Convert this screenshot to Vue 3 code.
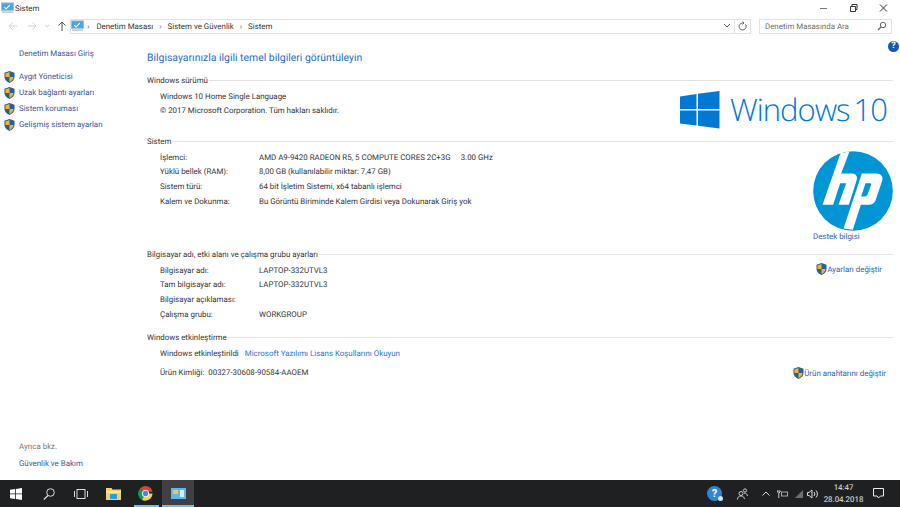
<script setup>
const sideLinks = ['Aygıt Yöneticisi', 'Uzak bağlantı ayarları', 'Sistem koruması', 'Gelişmiş sistem ayarları']
const systemRows = [
  ['İşlemci:', 'AMD A9-9420 RADEON R5, 5 COMPUTE CORES 2C+3G', '3.00 GHz'],
  ['Yüklü bellek (RAM):', '8,00 GB (kullanılabilir miktar: 7,47 GB)'],
  ['Sistem türü:', '64 bit İşletim Sistemi, x64 tabanlı işlemci'],
  ['Kalem ve Dokunma:', 'Bu Görüntü Biriminde Kalem Girdisi veya Dokunarak Giriş yok']
]
const nameRows = [
  ['Bilgisayar adı:', 'LAPTOP-332UTVL3'],
  ['Tam bilgisayar adı:', 'LAPTOP-332UTVL3'],
  ['Bilgisayar açıklaması:', ''],
  ['Çalışma grubu:', 'WORKGROUP']
]
</script>

<template>
  <div class="window">
    <header class="titlebar">
      <svg class="monitor" width="13" height="12" viewBox="0 0 14 12"><rect x="0.500" y="0.500" width="13" height="8" fill="#45a6ea" stroke="#a9bccd"/><path d="M3.500 5l2 2 4-4" stroke="#fff" stroke-width="1.200" fill="none"/><rect x="1" y="9.500" width="12" height="2" fill="#c5ccd3"/></svg>
      <span class="title">Sistem</span>
      <div class="caption">
        <svg width="9" height="10" viewBox="0 0 9 10"><path d="M1 5.500h7" stroke="#777" fill="none"/></svg>
        <svg width="9" height="10" viewBox="0 0 9 10"><path d="M1.500 3.500h5v5h-5zM3 3.500v-2h5v5H6.500" stroke="#333" fill="none"/></svg>
        <svg width="9" height="10" viewBox="0 0 9 10"><path d="M1 1.500l7 7M8 1.500l-7 7" stroke="#333" fill="none"/></svg>
      </div>
    </header>

    <nav class="addressrow">
      <svg class="nav" width="44" height="10" viewBox="0 0 44 10"><path d="M1 5h8M4.500 1.500L1 5l3.500 3.500M20 5h8M24.500 1.500L28 5l-3.500 3.500" stroke="#d0d0d0" fill="none"/><path d="M37 4l2 2 2-2" stroke="#d0d0d0" fill="none"/></svg>
      <svg class="up" width="10" height="10" viewBox="0 0 10 10"><path d="M5 10V1M1.500 4.500L5 1l3.500 3.500" stroke="#555" fill="none"/></svg>
      <div class="address">
        <svg width="13" height="12" viewBox="0 0 14 12"><rect x="0.500" y="0.500" width="13" height="8" fill="#45a6ea" stroke="#a9bccd"/><path d="M3.500 5l2 2 4-4" stroke="#fff" stroke-width="1.200" fill="none"/><rect x="1" y="9.500" width="12" height="2" fill="#c5ccd3"/></svg>
        <span class="crumb-sep first">›</span><span>Denetim Masası</span>
        <span class="crumb-sep">›</span><span>Sistem ve Güvenlik</span>
        <span class="crumb-sep">›</span><span>Sistem</span>
        <div class="addr-tools">
          <svg width="8" height="6" viewBox="0 0 8 6"><path d="M1 1l3 3 3-3" stroke="#555" fill="none"/></svg>
          <i class="addr-div"></i>
          <svg width="9" height="10" viewBox="0 0 9 10"><path d="M7.500 3.500A3.500 3.500 0 1 1 4.500 2H6M4.500 0.500L6 2 4.500 3.500" stroke="#666" fill="none"/></svg>
        </div>
      </div>
      <div class="search">
        <span>Denetim Masasında Ara</span>
        <svg width="10" height="10" viewBox="0 0 10 10"><circle cx="6" cy="4" r="2.700" stroke="#666" fill="none"/><path d="M4 6L1 9" stroke="#666" stroke-width="1.200"/></svg>
      </div>
    </nav>

    <div class="body">
      <aside class="sidebar">
        <a class="home">Denetim Masası Giriş</a>
        <ul class="sidelist">
          <li v-for="l in sideLinks" :key="l">
            <svg class="shield" width="11" height="12" viewBox="0 0 11 12"><path d="M5.500 0L10.500 1.800V6c0 3-2.500 5-5 6-2.500-1-5-3-5-6V1.800z" fill="#2a5f9e"/><path d="M5.500 1L5.500 6H1.500V2.500zM5.500 6h4c-.2 2.500-2 4-4 5z" fill="#f5b81f"/></svg>
            <a>{{ l }}</a>
          </li>
        </ul>
        <div class="seealso">
          <span>Ayrıca bkz.</span>
          <a>Güvenlik ve Bakım</a>
        </div>
      </aside>

      <main class="main">
        <div class="pagehead">
          <h1>Bilgisayarınızla ilgili temel bilgileri görüntüleyin</h1>
          <span class="help">?</span>
        </div>

        <section class="sec sec-ver">
          <h2><span>Windows sürümü</span></h2>
          <div class="sec-body">
            <div class="rows">
              <div class="row plain">Windows 10 Home Single Language</div>
              <div class="row plain">© 2017 Microsoft Corporation. Tüm hakları saklıdır.</div>
            </div>
            <div class="winlogo">
              <svg width="40" height="38" viewBox="0 0 40 38"><path d="M0 5.500L16.500 3V18H0zM18 2.800L39.500 0V18H18zM0 19.500H16.500V34.500L0 32.500zM18 19.500H39.500V37.500L18 34.800z" fill="#0078d4"/></svg>
              <span>Windows 10</span>
            </div>
          </div>
        </section>

        <section class="sec sec-sys">
          <h2><span>Sistem</span></h2>
          <div class="sec-body">
            <div class="rows">
              <div v-for="r in systemRows" :key="r[0]" class="row"><span class="k">{{ r[0] }}</span><span class="v">{{ r[1] }}</span><span v-if="r[2]" class="x">{{ r[2] }}</span></div>
            </div>
            <div class="oem">
              <svg width="80" height="80" viewBox="16.500 10.500 240 240"><circle cx="136.500" cy="130.500" r="119.500" fill="#0096d6"/><path fill="#fff" d="M99 17L126 12 101 78H132C147 78 151 88 147 100L124 172H93L116 107H98L77 172H45z"/><path fill="#fff" fill-rule="evenodd" d="M163 78H206C222 78 228 88 224 100L205 156C201 168 193 172 182 172H160L136 247 108 243zM174 107L161 147H171C176 147 179 145 180 141L191 112C192 109 190 107 187 107z"/></svg>
              <a>Destek bilgisi</a>
            </div>
          </div>
        </section>

        <section class="sec sec-name">
          <h2><span>Bilgisayar adı, etki alanı ve çalışma grubu ayarları</span></h2>
          <div class="sec-body">
            <div class="rows">
              <div v-for="r in nameRows" :key="r[0]" class="row"><span class="k">{{ r[0] }}</span><span class="v">{{ r[1] }}</span></div>
            </div>
            <a class="change change-a">
              <svg class="shield" width="11" height="12" viewBox="0 0 11 12"><path d="M5.500 0L10.500 1.800V6c0 3-2.500 5-5 6-2.500-1-5-3-5-6V1.800z" fill="#2a5f9e"/><path d="M5.500 1L5.500 6H1.500V2.500zM5.500 6h4c-.2 2.500-2 4-4 5z" fill="#f5b81f"/></svg>
              Ayarları değiştir
            </a>
          </div>
        </section>

        <section class="sec sec-act">
          <h2><span>Windows etkinleştirme</span></h2>
          <div class="activated">
            <span>Windows etkinleştirildi</span>
            <a class="lic">Microsoft Yazılımı Lisans Koşullarını Okuyun</a>
          </div>
          <div class="product">
            <span>Ürün Kimliği:&nbsp; 00327-30608-90584-AAOEM</span>
            <a class="change change-b">
              <svg class="shield" width="11" height="12" viewBox="0 0 11 12"><path d="M5.500 0L10.500 1.800V6c0 3-2.500 5-5 6-2.500-1-5-3-5-6V1.800z" fill="#2a5f9e"/><path d="M5.500 1L5.500 6H1.500V2.500zM5.500 6h4c-.2 2.500-2 4-4 5z" fill="#f5b81f"/></svg>
              Ürün anahtarını değiştir
            </a>
          </div>
        </section>
      </main>
    </div>

    <footer class="taskbar">
      <div class="tb-item"><svg width="12" height="12" viewBox="0 0 12 12"><path d="M0 1.800L5 1v4.500H0zM5.800 .9L12 0v5.500H5.800zM0 6.300h5V11l-5-.8zM5.800 6.300H12V12l-6.200-.9z" fill="#fff"/></svg></div>
      <div class="tb-item"><svg width="12" height="12" viewBox="0 0 12 12"><circle cx="7.500" cy="4.500" r="3.800" stroke="#ddd" fill="none"/><path d="M5 7.500L.8 11.500" stroke="#ddd" stroke-width="1.200"/></svg></div>
      <div class="tb-item"><svg width="14" height="10" viewBox="0 0 14 10"><rect x="3" y=".5" width="8" height="9" stroke="#ddd" fill="none"/><path d="M.5 2v6M13.500 2v6" stroke="#ddd" fill="none"/></svg></div>
      <div class="tb-item"><svg width="15" height="13" viewBox="0 0 15 13"><path d="M0 1h5.500l1 1.500H15V13H0z" fill="#f5cf67"/><path d="M0 4h15v2H0z" fill="#fbe6a2"/><path d="M4 7h7v5H4z" fill="#2d9fd8"/></svg></div>
      <div class="tb-item"><svg width="15" height="15" viewBox="0 0 16 16"><path d="M8 8L2 2.800A7.800 7.800 0 0 1 15.500 6H8z" fill="#db4437"/><path d="M8 8l-3.800 6.800A7.800 7.800 0 0 1 2 2.800z" fill="#0f9d58"/><path d="M8 8h7.500a7.800 7.800 0 0 1-11.300 6.800z" fill="#ffcd40"/><circle cx="8" cy="8" r="3.800" fill="#fff"/><circle cx="8" cy="8" r="2.900" fill="#4285f4"/></svg><i class="run"></i></div>
      <div class="tb-item active"><svg width="15" height="11" viewBox="0 0 15 11"><rect width="15" height="11" fill="#5cb8ec"/><rect x="2" y="2" width="5" height="4" fill="#e8c860"/><rect x="9" y="2" width="4" height="7" fill="#d8eefa"/></svg><i class="run"></i></div>
      <div class="tray">
        <span class="t-help">?<i class="t-dot"></i></span>
        <svg class="t-people" width="11" height="12" viewBox="0 0 11 12"><circle cx="4" cy="5.500" r="2" stroke="#ccc" fill="none"/><circle cx="8" cy="2.500" r="1.600" stroke="#ccc" fill="none"/><path d="M.5 11.500c0-2.500 1.500-3.500 3.500-3.500s3 1 3.500 3M7 5c2 0 3 1 3.500 3" stroke="#ccc" fill="none"/></svg>
        <svg class="t-chev" width="8" height="5" viewBox="0 0 8 5"><path d="M.5 4.500L4 1l3.500 3.500" stroke="#ddd" fill="none"/></svg>
        <svg class="t-net" width="11" height="8" viewBox="0 0 11 8"><path d="M0 1h3.500L1.800 3.500zM1.800 3.500V8" stroke="#ccc" fill="none"/><rect x="4.500" y="2" width="6" height="4" stroke="#aaa" fill="none"/></svg>
        <svg class="t-wifi" width="8" height="8" viewBox="0 0 8 8"><path d="M8 0v8H0z" fill="#6f6f6f"/></svg>
        <svg class="t-sound" width="12" height="10" viewBox="0 0 12 10"><path d="M.5 3.500h1.500L5 1v8L2 6.500H.5z" stroke="#ddd" fill="none"/><path d="M7 3a3 3 0 0 1 0 4M9 1.500a5 5 0 0 1 0 7" stroke="#ddd" fill="none"/></svg>
        <div class="clock"><span>14:47</span><span>28.04.2018</span></div>
        <svg class="t-note" width="11" height="11" viewBox="0 0 11 11"><path d="M.5.500h10v7.500H7.500L5.500 10 4 8H.5z" stroke="#eee" fill="none"/></svg>
      </div>
    </footer>
  </div>
</template>

<style scoped>
.window { width: 900px; height: 507px; display: flex; flex-direction: column; background: #fff; color: #333; font: 7.9px/11px Roboto, sans-serif; text-rendering: geometricPrecision; overflow: hidden; }
.titlebar { height: 15px; flex: none; display: flex; align-items: center; padding-left: 1px; }
.title { margin-left: 1px; padding-top: 1px; }
.caption { margin-left: auto; display: flex; gap: 21px; padding-right: 12px; }
.addressrow { height: 18px; flex: none; margin-top: 2px; display: flex; align-items: center; padding-left: 8px; }
.nav { flex: none; }
.up { margin-left: 5px; flex: none; }
.address { margin-left: 3px; width: 681px; height: 15px; border: 1px solid #e2e2e2; display: flex; align-items: center; padding-left: 0; box-sizing: border-box; }
.address span, .search span { padding-top: 1px; }
.crumb-sep { margin: 0 6px; color: #777; }
.crumb-sep.first { margin: 0 7px 0 3px; }
.addr-tools { margin-left: auto; display: flex; align-items: center; gap: 3px; padding-right: 3px; }
.addr-div { width: 1px; height: 13px; background: #e2e2e2; }
.search { margin-left: 8px; width: 133px; height: 15px; box-sizing: border-box; border: 1px solid #e2e2e2; display: flex; align-items: center; justify-content: space-between; padding: 0 4px 0 5px; color: #6d6d6d; }
.body { flex: 1; display: flex; min-height: 0; }
.sidebar { width: 147px; flex: none; display: flex; flex-direction: column; padding: 13px 0 11px 19px; box-sizing: border-box; }
a { color: #2d63b5; }
.sidebar a { color: #37559a; }
.home { display: block; }
.sidelist { list-style: none; margin: 12px 0 0 -15px; padding: 0; display: flex; flex-direction: column; gap: 5px; }
.sidelist li { display: flex; align-items: center; gap: 4px; height: 11px; }
.seealso { margin-top: auto; display: flex; flex-direction: column; gap: 6px; }
.seealso span { color: #777; }
.main { flex: 1; padding: 15px 7px 0 0; min-width: 0; }
.pagehead { display: flex; justify-content: space-between; height: 23px; }
h1 { margin: 0; font: 400 10.450px/16px Roboto, sans-serif; color: #2a6cc4; }
.help { width: 11px; height: 11px; margin: -9px -6px 0 0; border-radius: 50%; background: #0f5cb0; color: #fff; font: 700 9px/11px Roboto, sans-serif; text-align: center; }
.sec h2 { margin: 0; font: inherit; display: flex; align-items: center; gap: 1px; }
.sec h2::after { content: ""; flex: 1; height: 1px; background: #e3e3e3; }
.sec-body { display: flex; justify-content: space-between; }
.sec-ver { height: 61px; margin-top: 2px; }
.sec-sys { height: 113px; }
.sec-name { height: 83px; }
.rows { padding: 3px 0 0 13px; }
.row { display: flex; height: 14.600px; align-items: center; }
.k { width: 99px; }
.v { white-space: pre; }
.x { margin-left: 10px; }
.winlogo { display: flex; align-items: center; gap: 10px; margin-top: 5px; padding-right: 6px; color: #0078d4; font: 300 31px/38px "Open Sans", sans-serif; letter-spacing: -1px; word-spacing: -3px; }
.oem { display: flex; flex-direction: column; align-items: flex-start; padding-top: 4px; }
.oem a { line-height: 11px; }
.change { display: flex; align-items: center; gap: 0; color: #2d63b5; }
.change-a { align-self: flex-start; margin: 3px 11px 0 0; }
.change-b { margin-right: 7px; }
.activated { display: flex; gap: 6px; padding: 5px 0 0 13px; height: 11px; }
.lic { color: #2b74cc; }
.product { display: flex; justify-content: space-between; padding: 8px 0 0 13px; }
.taskbar { height: 27px; flex: none; background: #1f2022; display: flex; color: #ddd; }
.tb-item { width: 32.400px; display: flex; align-items: center; justify-content: center; position: relative; }
.tb-item.active { background: #3f4042; }
.run { position: absolute; left: 4px; right: 3px; bottom: 0; height: 2px; background: #76b9ed; }
.active .run { left: 0; right: 0; }
.tray { margin-left: auto; display: flex; align-items: center; padding-right: 16px; }
.t-help { width: 15px; height: 15px; border-radius: 50%; background: #2b86d6; color: #fff; font: 700 11px/15px Roboto, sans-serif; text-align: center; position: relative; }
.t-dot { position: absolute; right: -1px; bottom: 0; width: 5px; height: 5px; border-radius: 50%; background: #cfe6fa; }
.t-people { margin-left: 15px; }
.t-chev { margin-left: 14px; }
.t-net { margin-left: 7px; }
.t-wifi { margin-left: 7px; }
.t-sound { margin-left: 4px; }
.clock { width: 37px; margin-left: 6px; display: flex; flex-direction: column; align-items: center; line-height: 12px; color: #e8e8e8; }
.t-note { margin-left: 11px; }
</style>
